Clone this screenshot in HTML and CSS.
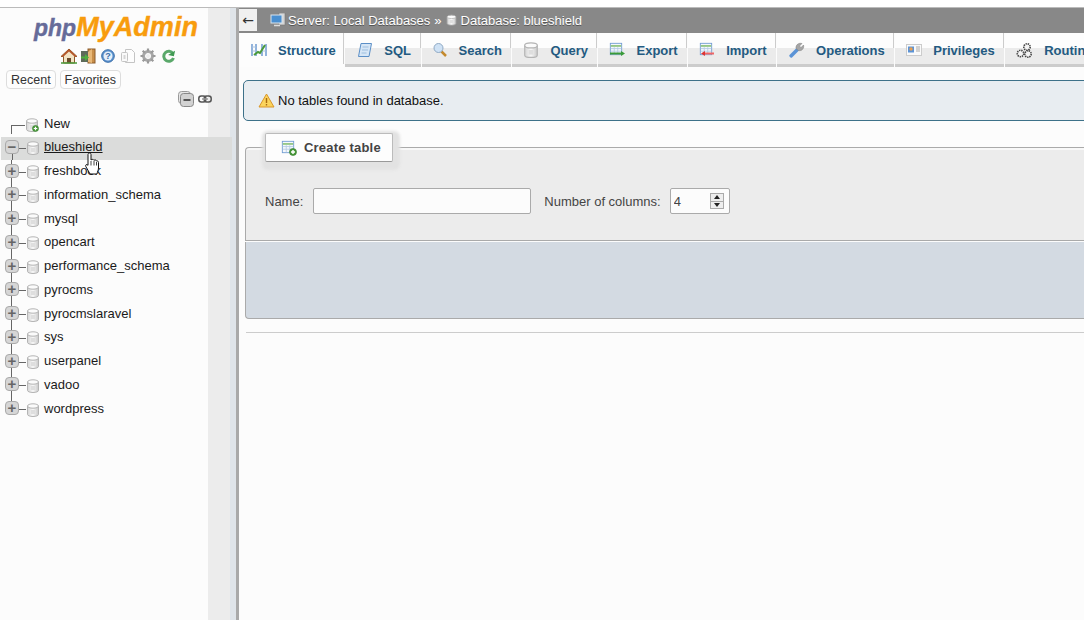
FILE: index.html
```html
<!DOCTYPE html>
<html lang="en">
<head>
  <meta charset="UTF-8">
  <meta name="viewport" content="width=device-width, initial-scale=1.0">
  <title>phpMyAdmin - blueshield</title>
  <link rel="stylesheet" href="styles.css">
</head>
<body>
  <!-- shared icons -->
  <svg class="icon-defs" width="0" height="0">
    <defs>
      <linearGradient id="db-grad" x1="0" x2="1" y1="0" y2="0">
        <stop offset="0" stop-color="#d4d4d4"/><stop offset="0.5" stop-color="#f8f8f8"/><stop offset="1" stop-color="#c8c8c8"/>
      </linearGradient>
      <symbol id="i-db" viewBox="0 0 14 14">
        <path d="M1.500 3v8.500C1.500 12.600 4 13.500 7 13.500s5.500-.9 5.500-2V3z" fill="url(#db-grad)" stroke="#b4b4b4"/>
        <ellipse cx="7" cy="3" rx="5.500" ry="2.200" fill="#fbfbfb" stroke="#b4b4b4"/>
        <rect x="5" y="7" width="4" height="4" fill="#dedede"/>
      </symbol>
      <symbol id="i-plus-badge" viewBox="0 0 8 8">
        <circle cx="4" cy="4" r="3.500" fill="#4a9a3a" stroke="#2f7a28" stroke-width=".6"/>
        <path d="M4 2v4M2 4h4" stroke="#fff" stroke-width="1.400"/>
      </symbol>
      <symbol id="i-table" viewBox="0 0 16 16">
        <rect x="1.500" y="1.500" width="13" height="13" fill="#f4f8fc" stroke="#6f9bd1"/>
        <path d="M2 4.500h12" stroke="#8fc47f" stroke-width="2"/>
        <path d="M2 7.500h12M2 10.500h12M6 6v8M10 6v8" stroke="#b5cce3"/>
      </symbol>
    </defs>
  </svg>

  <div class="page">
    <nav class="sidebar">
      <div class="logo"><span class="logo-php">php</span><span class="logo-my">MyAdmin</span></div>

      <div class="quick-links">
        <svg width="18" height="16" viewBox="0 0 18 16"><path d="M9 1 1 8.500h2.500V15h11V8.500H17z" fill="#f2e3c4" stroke="#8a5a2a"/><path d="M9 1 1 8.500l2 .5 6-5.500L15 9l2-.5z" fill="#b5562a"/><rect x="7" y="10" width="4" height="5" fill="#6b4a2a"/><path d="M1 15h16" stroke="#4a9a3a" stroke-width="1.500"/></svg>
        <svg width="17" height="16" viewBox="0 0 17 16"><rect x="8" y="1" width="7" height="14" fill="#c98f4a" stroke="#8a5a2a"/><path d="M8 4 12 1v14l-4-1z" fill="#e8b878"/><rect x="1" y="3" width="7" height="11" fill="#5e6a5a"/><path d="M1 8.500h4V6l4 3.500-4 3.500v-2.500H1z" fill="#4fae3e"/></svg>
        <svg width="14" height="14" viewBox="0 0 14 14"><circle cx="7" cy="7" r="6.300" fill="#5d93cf" stroke="#3a6ea8"/><circle cx="7" cy="7" r="4.500" fill="#e6f0fa"/><text x="7" y="10" class="help-mark" text-anchor="middle">?</text></svg>
        <svg width="16" height="16" viewBox="0 0 16 16"><path d="M5.500 1.500h6l3 3v10h-9z" fill="#fdfdfd" stroke="#c4c4c4"/><rect x="1.500" y="4.500" width="6" height="9" rx="1" fill="#fafafa" stroke="#c4c4c4"/><rect x="3.500" y="7" width="2" height="4" fill="#d5d5d5"/></svg>
        <svg width="16" height="16" viewBox="0 0 16 16"><circle cx="8" cy="8" r="4.500" fill="none" stroke="#a8a8a8" stroke-width="3"/><path d="M8 .5v3M8 12.500v3M.5 8h3M12.500 8h3M2.700 2.700l2 2M11.300 11.300l2 2M13.300 2.700l-2 2M4.700 11.300l-2 2" stroke="#9a9a9a" stroke-width="2.200"/><circle cx="8" cy="8" r="2" fill="#eee"/></svg>
        <svg width="13" height="14" viewBox="0 0 13 14"><path d="M11 4.500A5 5 0 1 0 11.500 9" fill="none" stroke="#5aa86a" stroke-width="3"/><path d="M6.500 6.500h6V1z" fill="#3f9a52" transform="rotate(12 9 4)"/></svg>
      </div>

      <div class="nav-tabs">
        <a class="nav-tab">Recent</a>
        <a class="nav-tab">Favorites</a>
      </div>

      <div class="tree-tools">
        <svg width="16" height="16" viewBox="0 0 16 16"><rect x=".5" y=".5" width="12" height="12" rx="3" fill="#e6e6e6" stroke="#999"/><rect x="2.500" y="2.500" width="13" height="13" rx="3" fill="#d2d2d2" stroke="#888"/><path d="M5.500 9h7" stroke="#555" stroke-width="2"/></svg>
        <svg width="14" height="8" viewBox="0 0 14 8"><rect x=".8" y="1" width="7" height="6" rx="2.500" fill="none" stroke="#555" stroke-width="1.500"/><rect x="6.200" y="1" width="7" height="6" rx="2.500" fill="none" stroke="#555" stroke-width="1.500"/><path d="M4 4h6" stroke="#999" stroke-width="1.500"/></svg>
      </div>

      <ul class="db-tree">
        <li class="db-row db-row-new">
          <span class="tree-elbow"></span>
          <svg class="db-icon" width="14" height="14"><use href="#i-db"/><use href="#i-plus-badge" x="7" y="7" width="7" height="7"/></svg>
          <a class="db-name">New</a>
        </li>
        <li class="db-row db-row-active">
          <span class="expander">&minus;</span><span class="tree-dash"></span>
          <svg class="db-icon" width="14" height="14"><use href="#i-db"/></svg>
          <a class="db-name">blueshield</a>
          <svg class="hand-cursor" width="14" height="23" viewBox="0 0 14 23"><path d="M3 2.500C3 .5 6 .5 6 2.500V8C7 7 8.500 7.300 9 8.300 10 7.500 11.200 8 11.500 9 12.500 8.500 13.500 9.300 13.500 10.500V16C13.500 18 12.500 19.500 12 22H5C4 19.500 2 17 .8 14.500 0 12.800 1.800 11.800 3 13.300z" fill="#fff" stroke="#111"/><path d="M6 9v4.500M9 9v4.500M11.500 10v3.500" stroke="#111" stroke-width=".8"/></svg>
        </li>
        <li class="db-row"><span class="expander">+</span><span class="tree-dash"></span><svg class="db-icon" width="14" height="14"><use href="#i-db"/></svg><a class="db-name">freshbook</a></li>
        <li class="db-row"><span class="expander">+</span><span class="tree-dash"></span><svg class="db-icon" width="14" height="14"><use href="#i-db"/></svg><a class="db-name">information_schema</a></li>
        <li class="db-row"><span class="expander">+</span><span class="tree-dash"></span><svg class="db-icon" width="14" height="14"><use href="#i-db"/></svg><a class="db-name">mysql</a></li>
        <li class="db-row"><span class="expander">+</span><span class="tree-dash"></span><svg class="db-icon" width="14" height="14"><use href="#i-db"/></svg><a class="db-name">opencart</a></li>
        <li class="db-row"><span class="expander">+</span><span class="tree-dash"></span><svg class="db-icon" width="14" height="14"><use href="#i-db"/></svg><a class="db-name">performance_schema</a></li>
        <li class="db-row"><span class="expander">+</span><span class="tree-dash"></span><svg class="db-icon" width="14" height="14"><use href="#i-db"/></svg><a class="db-name">pyrocms</a></li>
        <li class="db-row"><span class="expander">+</span><span class="tree-dash"></span><svg class="db-icon" width="14" height="14"><use href="#i-db"/></svg><a class="db-name">pyrocmslaravel</a></li>
        <li class="db-row"><span class="expander">+</span><span class="tree-dash"></span><svg class="db-icon" width="14" height="14"><use href="#i-db"/></svg><a class="db-name">sys</a></li>
        <li class="db-row"><span class="expander">+</span><span class="tree-dash"></span><svg class="db-icon" width="14" height="14"><use href="#i-db"/></svg><a class="db-name">userpanel</a></li>
        <li class="db-row"><span class="expander">+</span><span class="tree-dash"></span><svg class="db-icon" width="14" height="14"><use href="#i-db"/></svg><a class="db-name">vadoo</a></li>
        <li class="db-row db-row-last"><span class="expander">+</span><span class="tree-dash"></span><svg class="db-icon" width="14" height="14"><use href="#i-db"/></svg><a class="db-name">wordpress</a></li>
      </ul>
    </nav>

    <main class="content">
      <div class="breadcrumb">
        <button class="back-btn">&larr;</button>
        <svg class="crumb-server" width="16" height="14" viewBox="0 0 16 14"><rect x="9" y="0" width="6" height="12" fill="#d5d5d5" stroke="#777" stroke-width=".6"/><rect x="1" y="2" width="11" height="8" fill="#4a8fd0" stroke="#d8e4ee"/><path d="M4 12.500h6" stroke="#ddd" stroke-width="1.500"/></svg>
        <span class="crumb">Server: Local Databases</span>
        <span class="crumb-sep">&raquo;</span>
        <svg class="crumb-db" width="11" height="12"><use href="#i-db"/></svg>
        <span class="crumb">Database: blueshield</span>
      </div>

      <div class="tabs">
        <a class="tab tab-active">
          <svg width="16" height="16" viewBox="0 0 16 16"><path d="M1 2v12M5 2v12M11 2v12M15 2v12" stroke="#6f9bd1" stroke-width="1.500"/><path d="M1 5h4M11 5h4M1 9h4M11 9h4" stroke="#a9c3de"/><path d="m3 13 4-3 2 1 5-8" fill="none" stroke="#4a9a3a" stroke-width="2"/></svg>
          Structure
        </a>
        <a class="tab">
          <svg width="16" height="16" viewBox="0 0 16 16"><path d="M4 1.500h10.500L12 14.500H1.500z" fill="#d6e6f6" stroke="#5b8fc7"/><path d="M5.500 5h6M5 8h6M4.500 11h5" stroke="#9dbede"/></svg>
          SQL
        </a>
        <a class="tab">
          <svg width="15" height="16" viewBox="0 0 15 16"><path d="m8 9 5 5" stroke="#c48a2e" stroke-width="2.500"/><circle cx="5.500" cy="6" r="4.500" fill="#cfe2f5" stroke="#8fa9c4"/></svg>
          Search
        </a>
        <a class="tab">
          <svg width="16" height="16"><use href="#i-db"/></svg>
          Query
        </a>
        <a class="tab">
          <svg width="16" height="16" viewBox="0 0 16 16"><use href="#i-table" width="14" height="14"/><path d="M1 11.500h12" stroke="#3a9a3a" stroke-width="2"/><path d="m12 9 4 2.500-4 2.500z" fill="#3a9a3a"/></svg>
          Export
        </a>
        <a class="tab">
          <svg width="16" height="16" viewBox="0 0 16 16"><use href="#i-table" width="14" height="14"/><path d="M5 11.500h10" stroke="#e66" stroke-width="2"/><path d="M6 9 2 11.500 6 14z" fill="#d33"/></svg>
          Import
        </a>
        <a class="tab">
          <svg width="17" height="17" viewBox="0 0 17 17"><path d="m1.500 13 7-7 2.500 2.500-7 7c-1 1-3.500-1.500-2.500-2.500z" fill="#5b93d6"/><path d="M8 6.500C7.500 3 10.500.5 14 1.500L11.500 4l1.500 1.500 2.500-2.500c1 3-1.500 6.500-5 5.500z" fill="#a5a5a5" stroke="#7d7d7d" stroke-width=".5"/></svg>
          Operations
        </a>
        <a class="tab">
          <svg width="16" height="16" viewBox="0 0 16 16"><rect x=".5" y="2.500" width="15" height="11" fill="#fafafa" stroke="#ccc"/><rect x="2" y="4.500" width="6" height="6" fill="#5b93d6"/><circle cx="5" cy="7" r="1.700" fill="#e8a050"/><path d="M10 5h4M10 7h4M10 9h4" stroke="#aaa"/></svg>
          Privileges
        </a>
        <a class="tab">
          <svg width="17" height="17" viewBox="0 0 17 17"><g fill="#f4f4f4" stroke="#444" stroke-width="1.600" stroke-dasharray="1.400 .8"><circle cx="11" cy="5" r="3.200"/><circle cx="4.500" cy="11.500" r="3.200"/><circle cx="12" cy="12" r="3.200"/></g></svg>
          Routines
        </a>
      </div>

      <div class="notice">
        <svg width="17" height="15" viewBox="0 0 17 15"><path d="M8.500 1 16 14H1z" fill="#fbd45c" stroke="#d9962a" stroke-linejoin="round"/><path d="M8.500 5v5M8.500 11v1.500" stroke="#a86a10" stroke-width="1.400"/></svg>
        No tables found in database.
      </div>

      <form class="create-form">
        <div class="create-body">
          <div class="legend-tab">
            <svg width="16" height="16" viewBox="0 0 16 16"><use href="#i-table" width="14" height="14"/><use href="#i-plus-badge" x="8" y="8" width="8" height="8"/></svg>
            Create table
          </div>
          <div class="form-row">
            <label class="form-label" for="table-name">Name:</label>
            <input class="name-input" id="table-name" type="text">
            <label class="form-label cols-label" for="num-cols">Number of columns:</label>
            <span class="number-field">
              <input class="number-input" id="num-cols" type="text" value="4">
              <span class="spinner"><i class="spin-up"></i><i class="spin-down"></i></span>
            </span>
          </div>
        </div>
        <div class="create-footer"></div>
      </form>

      <hr class="divider">
    </main>
  </div>
</body>
</html>
```

FILE: styles.css
```css
* {
  box-sizing: border-box;
}

html, body {
  margin: 0;
  height: 100%;
  overflow: hidden;
}

body {
  font-family: "Liberation Sans", Arial, sans-serif;
  font-size: 12px;
  color: #222;
  background: #fff;
  padding-top: 7px;
}

.icon-defs {
  position: absolute;
}

.page {
  display: flex;
  height: 613px;
  border-top: 1px solid #bbb;
}

/* left navigation */
.sidebar {
  flex: 0 0 239px;
  border-right: 3px solid #a9a9a9;
  background: linear-gradient(90deg, #fcfcfc 208px, #ececec 208px, #ececec 230px, #dfe4e9 230px);
}

.logo {
  margin: 4px 0 0 34px;
  height: 30px;
  line-height: 30px;
  font-weight: bold;
  font-style: italic;
  white-space: nowrap;
  -webkit-text-stroke: 0.4px currentColor;
}

.logo-php {
  font-size: 23px;
  color: #666b99;
}

.logo-my {
  font-size: 27px;
  letter-spacing: 0.05px;
  color: #f89c0e;
}

.quick-links {
  display: flex;
  align-items: center;
  height: 18px;
  margin: 5px 0 0 60px;
}

/* the toolbar icons are not evenly spaced */
.quick-links svg:nth-child(1) { margin-right: 2px; }
.quick-links svg:nth-child(2) { margin-right: 4px; }
.quick-links svg:nth-child(3) { margin-right: 5px; }
.quick-links svg:nth-child(4) { margin-right: 4px; }
.quick-links svg:nth-child(5) { margin-right: 6px; }

.help-mark {
  font-size: 9px;
  font-weight: bold;
  fill: #3a6ea8;
}

.nav-tabs {
  display: flex;
  gap: 4px;
  margin: 5px 0 0 6px;
}

.nav-tab {
  padding: 2px 4px;
  height: 19px;
  line-height: 14px;
  font-size: 12.5px;
  color: #333;
  background: #fdfdfd;
  border: 1px solid #ddd;
  border-radius: 4px;
}

.tree-tools {
  display: flex;
  align-items: center;
  gap: 4px;
  margin: 2px 0 0 178px;
  height: 16px;
}

.db-tree {
  list-style: none;
  margin: 5.75px 0 0;
  padding: 0;
}

.db-row {
  position: relative;
  display: flex;
  align-items: center;
  width: 232px;
  height: 23.75px;
  padding: 0 0 3px 5px;
  font-size: 13px;
  background: linear-gradient(#666, #666) 11px 0 / 1px 100% no-repeat;
}

.db-row-new {
  padding-left: 11px;
  background: none;
}

.db-row-last {
  background-size: 1px 50%;
}

.db-row-active {
  background: linear-gradient(#666, #666) 11px 17px / 1px 100% no-repeat, #dbdcdb;
  margin-left: 1px;
  width: 231px;
  padding-left: 4px;
}

.tree-elbow {
  width: 14px;
  height: 9px;
  margin-bottom: -12px;
  border-top: 1px solid #666;
  border-left: 1px solid #666;
  flex: none;
}

.expander {
  flex: none;
  width: 14px;
  height: 14px;
  line-height: 11px;
  text-align: center;
  font-size: 15px;
  font-weight: bold;
  color: #666;
  background: #d6d6d6;
  border: 1px solid #aaa;
  border-radius: 4px;
}

.tree-dash {
  flex: none;
  width: 7px;
  height: 1px;
  margin-top: 3px;
  background: #666;
}

.db-icon {
  flex: none;
  margin-top: 3px;
}

.db-name {
  margin-left: 4px;
  color: #1a1a1a;
  white-space: nowrap;
}

.db-row-new .db-name {
  margin-left: 5px;
}

.db-row-active .db-name {
  text-decoration: underline;
}

.hand-cursor {
  position: absolute;
  z-index: 1;
  left: 84px;
  top: 15px;
}

/* main area */
.content {
  flex: 1;
  min-width: 0;
  overflow: hidden;
  background: #fcfcfc;
}

.breadcrumb {
  display: flex;
  align-items: center;
  gap: 2px;
  height: 25px;
  padding-bottom: 1px;
  background: #888;
  color: #fff;
  font-size: 13px;
  white-space: nowrap;
}

.back-btn {
  width: 18px;
  height: 22px;
  margin: 0 11px 0 0;
  padding: 0;
  border: none;
  background: #f0f0f0;
  color: #333;
  font-size: 14px;
  font-family: "DejaVu Sans", sans-serif;
}

.crumb {
  text-shadow: 0 1px 0 #555;
}

.crumb-sep {
  margin: 0 2px;
}

.crumb-db {
  margin-right: 2px;
}

.tabs {
  display: flex;
  height: 34px;
  margin-left: 1px;
  white-space: nowrap;
}

.tab {
  flex: none;
  display: flex;
  align-items: center;
  gap: 11px;
  padding: 3px 9.5px 0 11px;
  margin-right: 1px;
  font-size: 13px;
  font-weight: bold;
  color: #235a81;
  border-bottom: 3px solid #ccc;
  background:
    linear-gradient(#ccc, #ccc) right top / 1px 15px no-repeat,
    linear-gradient(#fdfdfd 15px, #ebebeb 15px);
}

.tab-active {
  padding-right: 8px;
  background: linear-gradient(#ccc, #ccc) right top / 1px 100% no-repeat, #fdfdfd;
  border-bottom-color: #fdfdfd;
}

.tab-active + .tab {
  padding-left: 12.5px;
}

.notice {
  display: flex;
  align-items: center;
  gap: 3px;
  height: 41px;
  margin: 13px -20px 0 4px;
  padding-left: 14px;
  font-size: 13px;
  color: #111;
  background: #e8edf1;
  border: 1px solid #3d7189;
  border-radius: 5px;
}

.create-form {
  margin: 26px -20px 0 6px;
}

.create-body {
  height: 94px;
  background: linear-gradient(#f8f8f8 2px, #ececec 2px);
  border: 1px solid #aaa;
  border-width: 1px 0 1px 1px;
  border-top-left-radius: 4px;
}

.legend-tab {
  display: flex;
  align-items: center;
  gap: 7px;
  width: 128px;
  height: 29px;
  margin: -15px 0 0 19px;
  padding-left: 15px;
  font-size: 13px;
  font-weight: bold;
  letter-spacing: 0.2px;
  color: #444;
  background: #fdfdfd;
  border: 1px solid #bbb;
  border-bottom-color: #999;
  border-radius: 2px;
  box-shadow: 2px 3px 3px 5px #e2e2e2;
}

.form-row {
  display: flex;
  align-items: center;
  margin: 26px 0 0 19px;
}

.form-label {
  padding-top: 1px;
  font-size: 13px;
  color: #444;
}

.name-input {
  width: 218px;
  height: 26px;
  margin-left: 10px;
  background: #fcfcfc;
  border: 1px solid #aaa;
  border-radius: 2px;
}

.cols-label {
  margin-left: 13px;
}

.number-field {
  display: flex;
  align-items: center;
  width: 60px;
  height: 26px;
  margin-left: 9px;
  background: #fcfcfc;
  border: 1px solid #aaa;
  border-radius: 2px;
}

.number-input {
  width: 39px;
  padding: 0 0 0 3px;
  border: none;
  background: transparent;
  color: #444;
  font: 13px "Liberation Sans", Arial, sans-serif;
}

.spinner {
  display: flex;
  flex-direction: column;
  width: 14px;
  height: 16px;
  border: 1px solid #aaa;
  background: #eee;
}

.spinner i {
  flex: 1;
  display: flex;
  align-items: center;
  justify-content: center;
}

.spin-up::before,
.spin-down::before {
  content: "";
  border-left: 3px solid transparent;
  border-right: 3px solid transparent;
}

.spin-up::before {
  border-bottom: 4px solid #222;
}

.spin-down {
  border-top: 1px solid #aaa;
}

.spin-down::before {
  border-top: 4px solid #222;
}

.create-footer {
  height: 77px;
  margin-top: 1px;
  background: #d3dae2;
  border: 1px solid #aaa;
  border-width: 0 0 1px 1px;
  border-bottom-left-radius: 4px;
}

.divider {
  height: 1px;
  margin: 13px 0 0 7px;
  border: none;
  background: #ccc;
}
```
